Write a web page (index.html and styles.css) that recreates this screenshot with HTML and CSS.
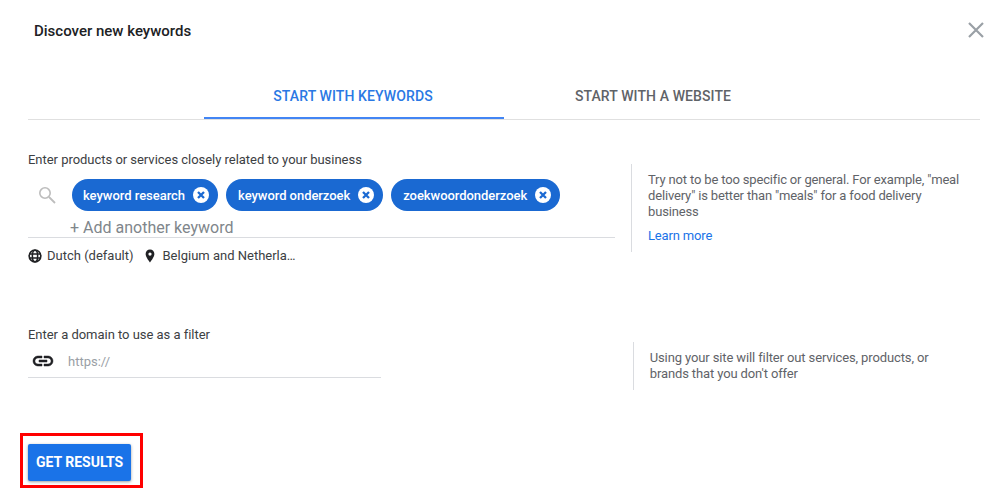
FILE: index.html
```html
<!DOCTYPE html>
<html lang="en">
<head>
<meta charset="utf-8">
<title>Discover new keywords</title>
<link rel="stylesheet" href="styles.css">
</head>
<body>
<div class="dialog">
  <header class="head">
    <h1 class="title">Discover new keywords</h1>
    <svg class="close" viewBox="0 0 16 16" width="16" height="16"><path d="M1 1L15 15M15 1L1 15" stroke="#9aa0a6" stroke-width="2.2" fill="none"/></svg>
  </header>
  <nav class="tabs">
    <div class="tab active">START WITH KEYWORDS</div>
    <div class="tab">START WITH A WEBSITE</div>
  </nav>
  <section class="row first">
    <div class="main">
      <div class="label">Enter products or services closely related to your business</div>
      <div class="kw-field">
        <svg class="search" viewBox="0 0 18 18" width="18" height="18"><circle cx="7" cy="7" r="5.2" stroke="#bdbdbd" stroke-width="1.6" fill="none"/><path d="M11 11L17 17" stroke="#bdbdbd" stroke-width="1.8"/></svg>
        <div class="kw-body">
          <div class="chips">
            <span class="chip">keyword research<svg class="x" viewBox="0 0 16 16" width="16" height="16"><circle cx="8" cy="8" r="8" fill="#fff"/><path d="M5 5L11 11M11 5L5 11" stroke="#1a69d2" stroke-width="2.3"/></svg></span>
            <span class="chip">keyword onderzoek<svg class="x" viewBox="0 0 16 16" width="16" height="16"><circle cx="8" cy="8" r="8" fill="#fff"/><path d="M5 5L11 11M11 5L5 11" stroke="#1a69d2" stroke-width="2.3"/></svg></span>
            <span class="chip">zoekwoordonderzoek<svg class="x" viewBox="0 0 16 16" width="16" height="16"><circle cx="8" cy="8" r="8" fill="#fff"/><path d="M5 5L11 11M11 5L5 11" stroke="#1a69d2" stroke-width="2.3"/></svg></span>
          </div>
          <div class="add">+ Add another keyword</div>
        </div>
      </div>
      <div class="meta">
        <svg viewBox="0 0 24 24" width="14" height="14"><circle cx="12" cy="12" r="10" fill="none" stroke="#202124" stroke-width="2.8"/><ellipse cx="12" cy="12" rx="4.5" ry="10" fill="none" stroke="#202124" stroke-width="2.6"/><path d="M2 8.500H22M2 15.500H22" stroke="#202124" stroke-width="2.6"/></svg>
        <span class="lang">Dutch (default)</span>
        <svg class="pin" viewBox="0 0 24 24" width="14" height="14"><path d="M12 1C7.600 1 4.500 4.300 4.500 8.600 4.500 14 12 23 12 23s7.500-9 7.500-14.400C19.500 4.300 16.400 1 12 1zm0 10.500a2.800 2.800 0 1 1 0-5.600 2.800 2.800 0 0 1 0 5.600z" fill="#202124"/></svg>
        <span>Belgium and Netherla…</span>
      </div>
    </div>
    <aside class="hint">
      <p>Try not to be too specific or general. For example, "meal delivery" is better than "meals" for a food delivery business</p>
      <a class="more">Learn more</a>
    </aside>
  </section>
  <section class="row second">
    <div class="main">
      <div class="label">Enter a domain to use as a filter</div>
      <div class="url-field">
        <svg viewBox="0 0 24 24" width="24" height="24"><path d="M3.900 12c0-1.710 1.390-3.100 3.100-3.100h4V7H7c-2.760 0-5 2.240-5 5s2.240 5 5 5h4v-1.900H7c-1.710 0-3.100-1.390-3.100-3.100zM8 13h8v-2H8v2zm9-6h-4v1.900h4c1.710 0 3.100 1.390 3.100 3.100s-1.390 3.100-3.100 3.100h-4V17h4c2.760 0 5-2.240 5-5s-2.240-5-5-5z" fill="#202124" stroke="#202124" stroke-width=".5"/></svg>
        <span class="ph">https://</span>
      </div>
    </div>
    <aside class="hint">
      <p>Using your site will filter out services, products, or brands that you don't offer</p>
    </aside>
  </section>
  <div class="actions">
    <div class="highlight">
      <button class="go">GET RESULTS</button>
    </div>
  </div>
</div>
</body>
</html>
```
FILE: styles.css
```css
* { box-sizing: border-box; }
html, body { margin: 0; height: 100%; background: #fff; }
body { font-family: Roboto, "Liberation Sans", sans-serif; color: #3c4043; overflow: hidden; }
.dialog { width: 1004px; height: 493px; padding: 0 24px 0 28px; display: flex; flex-direction: column; }
.head { height: 62px; margin-bottom: -2px; display: flex; justify-content: space-between; align-items: center; padding: 0 0 0 6px; }
.title { margin: 0; font-size: 15px; font-weight: 500; color: #202124; }
.close { margin-right: -4px; margin-top: -2px; }
.tabs { height: 60px; display: flex; padding-left: 176px; border-bottom: 1px solid #e0e0e0; }
.tab { width: 300px; height: 60px; display: flex; align-items: center; justify-content: center; font-size: 14px; font-weight: 500; letter-spacing: .1px; color: #5f6368; padding: 11px 2px 0 0; }
.tab.active { color: #2a78e4; border-bottom: 2px solid #4285f4; padding-top: 14px; height: 59px; }
.row { display: flex; }
.first { margin-top: 32px; height: 140px; }
.second { margin-top: 35px; height: 60px; }
.main { width: 587px; }
.label { font-size: 13px; line-height: 16px; letter-spacing: -.03px; color: #3c4043; }
.kw-field { display: flex; margin-top: 11px; height: 59px; border-bottom: 1px solid #dadce0; }
.search { margin: 7px 0 0 10px; flex: none; }
.kw-body { margin-left: 16px; }
.chips { display: flex; gap: 8px; }
.chip { height: 32px; border-radius: 16px; background: #1a69d2; color: #fff; font-size: 13px; font-weight: 500; display: inline-flex; align-items: center; padding: 0 9px 0 12px; letter-spacing: -.05px; }
.chip:first-child { padding-left: 11px; letter-spacing: -.03px; }
.x { margin-left: 8px; }
.add { margin: 7px 0 0 -2px; font-size: 16px; line-height: 20px; color: #80868b; white-space: nowrap; }
.meta { display: flex; align-items: center; margin-top: 10px; font-size: 13px; line-height: 16px; color: #3c4043; }
.meta svg { flex: none; }
.lang { margin: 0 9px 0 5px; }
.pin { margin-right: 6px; }
.hint { margin: 12px 0 0 16px; height: 88px; border-left: 1px solid #dadce0; padding-left: 16px; font-size: 13px; line-height: 16px; letter-spacing: -.16px; color: #5f6368; width: 348px; }
.hint p { margin: 8px 0 0; width: 318px; }
.more { display: block; margin-top: 8px; color: #1a73e8; }
.second .hint { margin: 15px 0 0 19px; height: 48px; padding-left: 16px; letter-spacing: -.12px; }
.second .hint p { width: 300px; }
.url-field { width: 353px; height: 33px; margin-top: 2px; display: flex; align-items: center; border-bottom: 1px solid #dadce0; padding-left: 3px; }
.ph { margin-left: 13px; font-size: 13px; color: #9aa0a6; }
.actions { margin: 46px 0 0 -8px; }
.highlight { width: 123px; height: 55px; border: 3px solid #f00; padding: 8px 9px 4px 5px; }
.go { display: block; width: 103px; height: 37px; border: 0; border-radius: 2px; background: #1a73e8; color: #fff; font: 700 14px Roboto, sans-serif; padding: 0 0 1px; box-shadow: 0 1px 3px rgba(60,64,67,.5); }
```
